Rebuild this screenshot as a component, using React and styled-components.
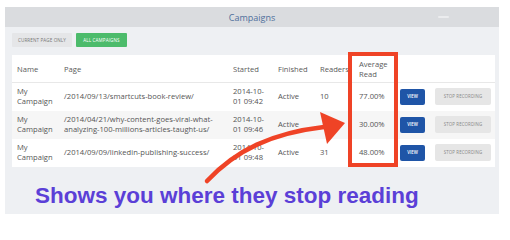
import React from 'react';
import styled, { createGlobalStyle } from 'styled-components';

const Global = createGlobalStyle`
  html, body { margin: 0; padding: 0; background: #fff; }
  body { font-family: "Open Sans", "Noto Sans", sans-serif; }
`;

const Page = styled.div`
  position: relative;
  width: 510px;
  height: 220px;
  padding: 7px 0 0 5px;
  box-sizing: border-box;
  overflow: hidden;
`;

const Panel = styled.div`
  width: 494px;
  height: 207px;
  background: #eef0f3;
  display: flex;
  flex-direction: column;
`;

const PanelHeader = styled.div`
  height: 20px;
  background: #dadcdf;
  display: flex;
  align-items: center;
  justify-content: center;
  position: relative;
  font-size: 9px;
  color: #4f6f9c;
`;

const Minimize = styled.span`
  position: absolute;
  right: 50px;
  top: 9px;
  width: 11px;
  height: 2px;
  border-radius: 1px;
  background: #ebecee;
`;

const Toolbar = styled.div`
  display: flex;
  gap: 4px;
  padding: 6px 7px 0;
`;

const Filter = styled.button`
  height: 14px;
  width: ${p => p.$w}px;
  border: none;
  border-radius: 1px;
  padding: 0;
  font-family: inherit;
  font-size: 4.6px;
  letter-spacing: 0.1px;
  text-transform: uppercase;
  background: ${p => (p.$active ? '#4cbb6b' : '#e5e6e8')};
  color: ${p => (p.$active ? '#fff' : '#777')};
`;

const TableWrap = styled.div`
  position: relative;
  margin: 8px 0 0 7px;
  width: 483px;
`;

const Table = styled.table`
  width: 483px;
  border-collapse: collapse;
  table-layout: fixed;
  background: #fff;
  font-size: 7.6px;
  color: #555;
`;

const Th = styled.th`
  height: 27px;
  padding: 0 0 0 5px;
  text-align: left;
  font-weight: 400;
  line-height: 10px;
  color: #5a5a5a;
  border-bottom: 1px solid #e8e8e8;
`;

const Row = styled.tr`
  height: 28px;
  background: ${p => (p.$alt ? '#f6f6f6' : '#fff')};
`;

const Td = styled.td`
  padding: 0 0 0 5px;
  line-height: 9.5px;
  vertical-align: middle;
  white-space: nowrap;
`;

const ViewButton = styled.span`
  display: inline-flex;
  align-items: center;
  justify-content: center;
  width: 25px;
  height: 16px;
  border-radius: 2px;
  background: #1f55a7;
  color: #fff;
  font-size: 4.4px;
  font-weight: 600;
`;

const StopButton = styled.span`
  display: inline-flex;
  align-items: center;
  justify-content: center;
  width: 56px;
  height: 17px;
  border-radius: 2px;
  background: #e6e6e6;
  color: #888;
  font-size: 4.4px;
  letter-spacing: 0.1px;
`;

const Highlight = styled.div`
  position: absolute;
  left: 336px;
  top: -3px;
  width: 50px;
  height: 115px;
  border: 4px solid #ef4326;
  box-sizing: border-box;
  pointer-events: none;
`;

const Caption = styled.div`
  padding: 16px 0 0 30px;
  font-family: "Liberation Sans", Arial, sans-serif;
  font-weight: 700;
  font-size: 22.5px;
  line-height: 26px;
  color: #5b3fd7;
  white-space: nowrap;
`;

const Overlay = styled.svg`
  position: absolute;
  left: 0;
  top: 0;
  pointer-events: none;
`;

const rows = [
  { page: ['/2014/09/13/smartcuts-book-review/'], time: '09:42', readers: '10', avg: '77.00%' },
  { page: ['/2014/04/21/why-content-goes-viral-what-', 'analyzing-100-millions-articles-taught-us/'], time: '09:46', readers: '', avg: '30.00%' },
  { page: ['/2014/09/09/linkedin-publishing-success/'], time: '09:48', readers: '31', avg: '48.00%' },
];

const Lines = ({ items }) => items.map((t, i) => (
  <React.Fragment key={i}>{i > 0 && <br />}{t}</React.Fragment>
));

export default function App() {
  return (
    <>
      <Global />
      <Page>
        <Panel>
          <PanelHeader>
            Campaigns
            <Minimize />
          </PanelHeader>
          <Toolbar>
            <Filter $w={60}>Current page only</Filter>
            <Filter $w={51} $active>All campaigns</Filter>
          </Toolbar>
          <TableWrap>
            <Table>
              <colgroup>
                <col style={{ width: 47 }} />
                <col style={{ width: 169 }} />
                <col style={{ width: 45 }} />
                <col style={{ width: 42 }} />
                <col style={{ width: 39 }} />
                <col style={{ width: 41 }} />
                <col style={{ width: 35 }} />
                <col style={{ width: 65 }} />
              </colgroup>
              <thead>
                <tr>
                  <Th>Name</Th>
                  <Th>Page</Th>
                  <Th>Started</Th>
                  <Th>Finished</Th>
                  <Th>Readers</Th>
                  <Th>Average<br />Read</Th>
                  <Th />
                  <Th />
                </tr>
              </thead>
              <tbody>
                {rows.map((r, i) => (
                  <Row key={i} $alt={i === 1}>
                    <Td>My<br />Campaign</Td>
                    <Td><Lines items={r.page} /></Td>
                    <Td>2014-10-<br />01 {r.time}</Td>
                    <Td>Active</Td>
                    <Td>{r.readers}</Td>
                    <Td>{r.avg}</Td>
                    <Td><ViewButton>VIEW</ViewButton></Td>
                    <Td><StopButton>STOP RECORDING</StopButton></Td>
                  </Row>
                ))}
              </tbody>
            </Table>
            <Highlight />
          </TableWrap>
          <Caption>Shows you where they stop reading</Caption>
        </Panel>
        <Overlay width="510" height="220" viewBox="0 0 510 220">
          <path d="M207 181 C236 150 272 133 324 127" fill="none" stroke="#ef4326" strokeWidth="4.5" strokeLinecap="round" />
          <polygon points="320,112 345,123 327,144" fill="#ef4326" />
        </Overlay>
      </Page>
    </>
  );
}
